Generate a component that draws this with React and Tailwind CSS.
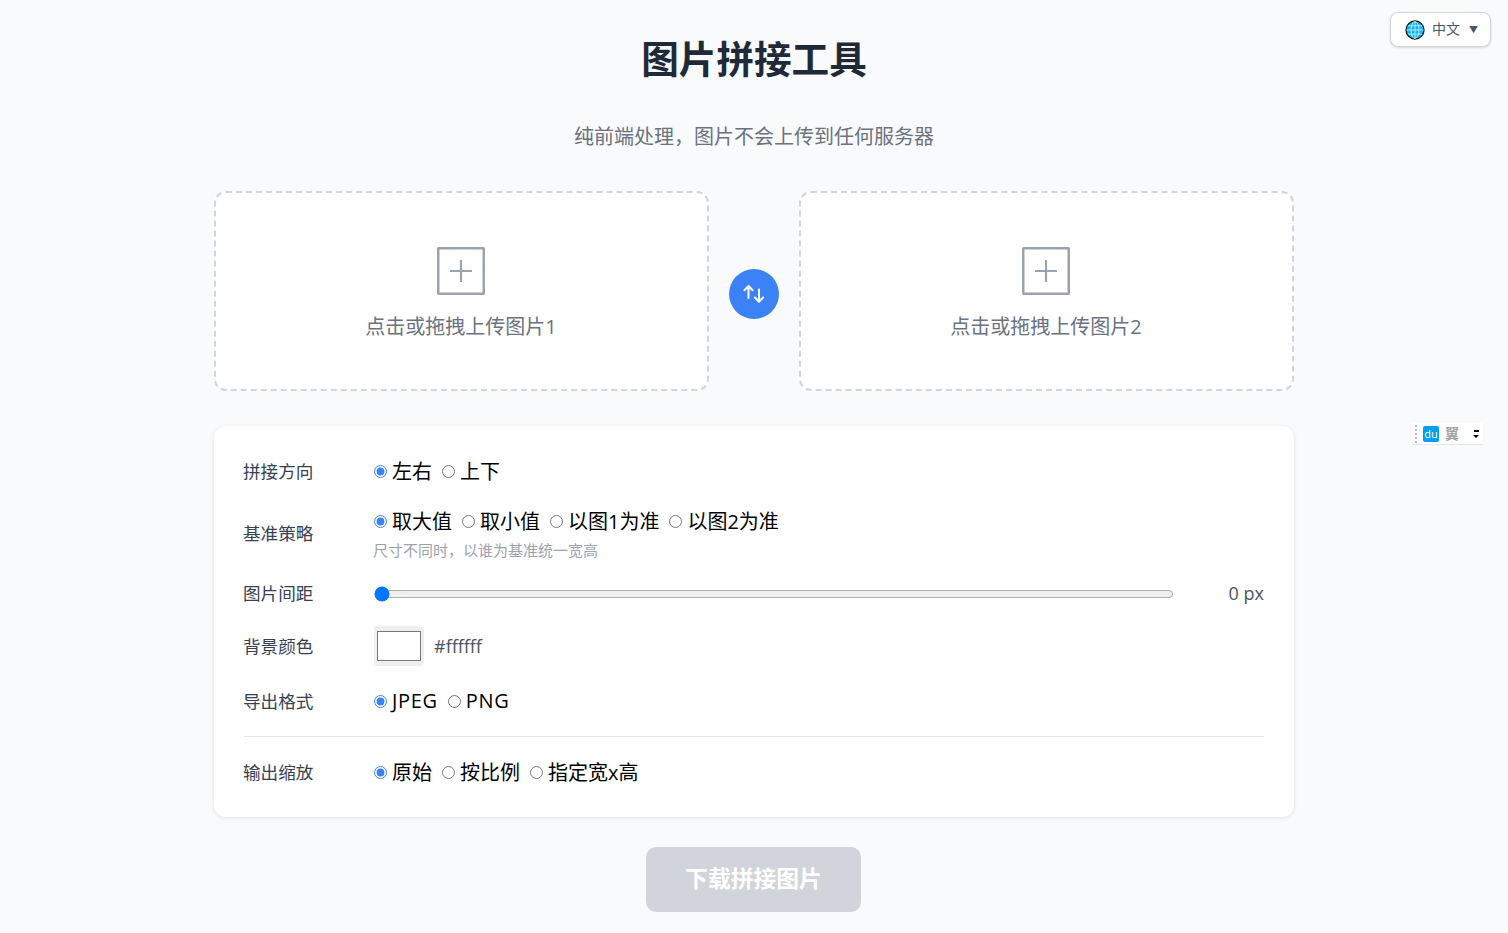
import React from "react";

const FONT = "font-['Open_Sans','Noto_Sans_CJK_SC',sans-serif]";

function Radio({ name, label, checked, latin }) {
  return (
    <label className="flex items-center gap-[5px] text-[20px] leading-[30px] text-black">
      <input type="radio" name={name} defaultChecked={checked} className="w-[13px] h-[13px] accent-[#3b82f6] appearance-auto" />
      <span className={latin ? "tracking-[0.7px]" : "translate-y-[1px]"}>{label}</span>
    </label>
  );
}

function Row({ label, children, className = "" }) {
  return (
    <div className={`flex items-center ${className}`}>
      <div className="w-[130px] shrink-0 -ml-[1px] mr-[1px] text-[17.6px] text-[#374151] leading-[26px]">{label}</div>
      {children}
    </div>
  );
}

function Upload({ text }) {
  return (
    <div className="flex-1 h-[200px] rounded-[12px] border-2 border-dashed border-[#d1d5db] bg-white flex flex-col items-center pt-[54px] pr-[1px]">
      <svg width="48" height="48" viewBox="0 0 48 48" fill="none" stroke="#9ca3af">
        <rect x="1.2" y="1.2" width="45.6" height="45.6" rx="1" strokeWidth="2.6" />
        <path d="M24 13v22M13 24h22" strokeWidth="2.2" />
      </svg>
      <div className="mt-[17px] text-[20px] leading-[29px] text-[#6b7280]">{text}</div>
    </div>
  );
}

function Globe() {
  return (
    <svg width="20" height="20" viewBox="0 0 20 20" fill="none">
      <circle cx="10" cy="10" r="9" fill="#12b5f0" stroke="#111" strokeWidth="1.3" />
      <g stroke="#bfeeff" strokeWidth="0.9">
        <ellipse cx="10" cy="10" rx="4" ry="8.5" />
        <path d="M10 1.5v17M1.5 10h17M2.8 5.8h14.4M2.8 14.2h14.4" />
      </g>
    </svg>
  );
}

export default function App() {
  return (
    <div className={`relative min-h-screen bg-[#f9fafb] ${FONT}`}>
      <button className="absolute top-[12px] right-[17px] w-[101px] h-[35px] flex items-center justify-center gap-[8px] pl-[2px] rounded-[8px] border border-[#d1d5db] bg-white shadow-sm text-[14px] leading-[20px] text-[#4b5563]">
        <Globe />
        <span className="-mt-[1px] -ml-[1px]">中文</span>
        <span className="text-[9px] ml-[1px]">▼</span>
      </button>

      <div className="absolute left-[1412px] top-[423px] w-[71px] h-[22px] bg-white border-b border-[#e5e7eb] flex items-center">
        <div className="h-[18px] w-[2px] ml-[3px] border-l-2 border-dotted border-[#bbb]" />
        <div className="ml-[6px] w-[16px] h-[16px] rounded-[2px] bg-[#00a0f0] text-white text-[11px] leading-[15px] text-center">du</div>
        <div className="ml-[6px] text-[14px] leading-[16px] font-bold text-[#a3a3a3]">翼</div>
        <div className="ml-[14px] flex flex-col items-center">
          <div className="w-[5px] h-[2px] bg-black mb-[3px]" />
          <div className="w-0 h-0 border-x-[3px] border-x-transparent border-t-[3px] border-t-black" />
        </div>
      </div>

      <div className="w-[1080px] mx-auto pt-[30px] pb-[21px]">
        <h1 className="text-center text-[37.6px] leading-[56px] font-bold text-[#1f2937] mt-[1px]">图片拼接工具</h1>
        <p className="mt-[36px] text-center text-[20px] leading-[28px] text-[#6b7280]">纯前端处理，图片不会上传到任何服务器</p>

        <div className="mt-[40px] flex items-center gap-[20px]">
          <Upload text="点击或拖拽上传图片1" />
          <button className="mt-[6px] w-[50px] h-[50px] shrink-0 rounded-full bg-[#3b82f6] flex items-center justify-center">
            <svg width="24" height="24" viewBox="0 0 24 24" fill="none" stroke="#fff" strokeWidth="2" strokeLinecap="round" strokeLinejoin="round">
              <path d="M6.5 4v12M2.4 8.2L6.5 4l4.1 4.2" />
              <path d="M17 7.5v12M12.9 15.5l4.1 4.2 4.1-4.2" />
            </svg>
          </button>
          <Upload text="点击或拖拽上传图片2" />
        </div>

        <div className="mt-[35px] bg-white rounded-[12px] shadow-[0_1px_4px_rgba(0,0,0,0.1)] p-[30px] flex flex-col gap-[20px]">
          <Row label="拼接方向">
            <div className="flex gap-[10px]">
              <Radio name="dir" label="左右" checked />
              <Radio name="dir" label="上下" />
            </div>
          </Row>
          <Row label="基准策略">
            <div>
              <div className="flex gap-[10px]">
                <Radio name="base" label="取大值" checked />
                <Radio name="base" label="取小值" />
                <Radio name="base" label="以图1为准" />
                <Radio name="base" label="以图2为准" />
              </div>
              <div className="mt-[2px] -ml-[1px] translate-y-[1px] text-[15px] leading-[22px] text-[#9ca3af]">尺寸不同时，以谁为基准统一宽高</div>
            </div>
          </Row>
          <Row label="图片间距">
            <input type="range" min="0" max="100" defaultValue="0" className="mt-[2px] w-[800px] appearance-auto" />
            <div className="ml-auto text-[18px] leading-[26px] text-[#4b5563]">0 px</div>
          </Row>
          <Row label="背景颜色">
            <input type="color" defaultValue="#ffffff" className="w-[50px] h-[40px] p-px rounded-[4px] bg-[#efefef] appearance-auto" />
            <span className="ml-[10px] text-[18px] leading-[26px] text-[#4b5563]">#ffffff</span>
          </Row>
          <Row label="导出格式">
            <div className="flex gap-[10px]">
              <Radio name="fmt" label="JPEG" checked latin />
              <Radio name="fmt" label="PNG" latin />
            </div>
          </Row>
          <div className="h-px bg-[#e5e7eb]" />
          <Row label="输出缩放">
            <div className="flex gap-[10px]">
              <Radio name="scale" label="原始" checked />
              <Radio name="scale" label="按比例" />
              <Radio name="scale" label="指定宽x高" />
            </div>
          </Row>
        </div>

        <div className="mt-[30px] flex justify-center">
          <button disabled className="mr-[1px] w-[215px] h-[65px] rounded-[10px] bg-[#d1d5db] text-white text-[22.8px] font-bold">下载拼接图片</button>
        </div>
      </div>
    </div>
  );
}
